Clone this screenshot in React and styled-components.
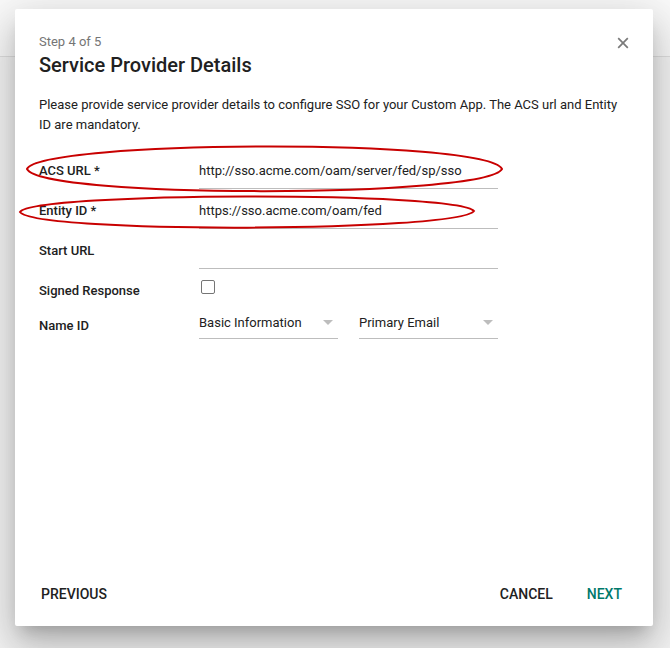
import React, { useState } from 'react';
import styled, { createGlobalStyle } from 'styled-components';

const GlobalStyle = createGlobalStyle`
  html, body {
    margin: 0;
    padding: 0;
    background: #f5f5f5;
    font-family: Roboto, "Liberation Sans", Arial, sans-serif;
    color: #212121;
  }
  * { box-sizing: border-box; }
`;

const Page = styled.div`
  position: relative;
  width: 670px;
  height: 648px;
  overflow: hidden;
  background: #f5f5f5;
`;

const AppBar = styled.div`
  height: 57px;
  background: #fafafa;
  border-bottom: 1px solid #e0e0e0;
`;

const Overlay = styled.div`
  position: absolute;
  inset: 0;
  padding: 9px 17px 22px 15px;
`;

const Dialog = styled.div`
  position: relative;
  width: 638px;
  height: 617px;
  background: #fff;
  border-radius: 2px;
  box-shadow: 0 11px 15px -7px rgba(0, 0, 0, 0.2), 0 24px 38px 3px rgba(0, 0, 0, 0.14),
    0 9px 46px 8px rgba(0, 0, 0, 0.12);
  display: flex;
  flex-direction: column;
`;

const Header = styled.div`
  position: relative;
  padding: 25px 24px 0 24px;
`;

const Step = styled.div`
  font-size: 13px;
  line-height: 16px;
  color: #757575;
`;

const Title = styled.h2`
  margin: 3px 0 0;
  font-size: 20px;
  line-height: 24px;
  font-weight: 500;
  color: #212121;
`;

const CloseButton = styled.button`
  position: absolute;
  top: 22px;
  right: 18px;
  width: 24px;
  height: 24px;
  padding: 0;
  border: none;
  background: transparent;
  display: flex;
  align-items: center;
  justify-content: center;
  cursor: pointer;
  color: #7a7a7a;
`;

const Body = styled.div`
  flex: 1;
  padding: 18px 24px 0 24px;
`;

const Description = styled.p`
  margin: 0 0 15px;
  font-size: 13px;
  line-height: 20px;
  color: #212121;
`;

const Form = styled.div`
  position: relative;
  display: flex;
  flex-direction: column;
`;

const Row = styled.div`
  display: grid;
  grid-template-columns: 160px 299px;
  grid-template-rows: ${p => p.$h || 40}px;
  align-items: center;
`;

const Label = styled.label`
  font-size: 13px;
  font-weight: 500;
  color: #212121;
`;

const TextInput = styled.input`
  width: 100%;
  height: 36px;
  margin-top: 2px;
  padding: 0;
  border: none;
  border-bottom: 1px solid #bdbdbd;
  background: transparent;
  font-family: inherit;
  font-size: 13px;
  color: #212121;
  outline: none;
`;

const CheckBox = styled.span`
  display: block;
  width: 14px;
  height: 14px;
  margin: 0 0 6px 2px;
  border: 1.5px solid #757575;
  border-radius: 2px;
  background: #fff;
`;

const SelectPair = styled.div`
  display: grid;
  grid-template-columns: 139px 139px;
  column-gap: 21px;
  margin-top: -5px;
`;

const Select = styled.div`
  height: 32px;
  display: flex;
  align-items: center;
  justify-content: space-between;
  padding-right: 5px;
  border-bottom: 1px solid #bdbdbd;
  font-size: 13px;
  color: #212121;
`;

const Caret = styled.span`
  width: 0;
  height: 0;
  border-left: 5px solid transparent;
  border-right: 5px solid transparent;
  border-top: 5px solid #bdbdbd;
`;

const Marks = styled.svg`
  position: absolute;
  left: -39px;
  top: 0;
  pointer-events: none;
  overflow: visible;
`;

const Footer = styled.div`
  display: flex;
  align-items: center;
  padding: 0 23px 14px 18px;
`;

const Spacer = styled.div`
  flex: 1;
`;

const FlatButton = styled.button`
  height: 36px;
  padding: 0 8px;
  margin-left: ${p => p.$gap || 0}px;
  border: none;
  background: transparent;
  font-family: inherit;
  font-size: 14px;
  font-weight: 500;
  text-transform: uppercase;
  color: ${p => (p.$primary ? '#00796b' : '#212121')};
  cursor: pointer;
`;

export default function App() {
  const [acs, setAcs] = useState('http://sso.acme.com/oam/server/fed/sp/sso');
  const [entity, setEntity] = useState('https://sso.acme.com/oam/fed');
  const [start, setStart] = useState('');

  return (
    <>
      <GlobalStyle />
      <Page>
        <AppBar />
        <Overlay>
          <Dialog>
            <Header>
              <Step>Step 4 of 5</Step>
              <Title>Service Provider Details</Title>
              <CloseButton aria-label="Close">
                <svg width="12" height="12" viewBox="0 0 12 12">
                  <path d="M1.2 1.2L10.8 10.8M10.8 1.2L1.2 10.8" stroke="currentColor" strokeWidth="1.7" />
                </svg>
              </CloseButton>
            </Header>
            <Body>
              <Description>
                Please provide service provider details to configure SSO for your Custom App. The ACS url and Entity ID are mandatory.
              </Description>
              <Form>
                <Row>
                  <Label>ACS URL *</Label>
                  <TextInput value={acs} onChange={e => setAcs(e.target.value)} />
                </Row>
                <Row>
                  <Label>Entity ID *</Label>
                  <TextInput value={entity} onChange={e => setEntity(e.target.value)} />
                </Row>
                <Row>
                  <Label>Start URL</Label>
                  <TextInput value={start} onChange={e => setStart(e.target.value)} />
                </Row>
                <Row $h={40}>
                  <Label>Signed Response</Label>
                  <CheckBox />
                </Row>
                <Row $h={30}>
                  <Label>Name ID</Label>
                  <SelectPair>
                    <Select>
                      Basic Information
                      <Caret />
                    </Select>
                    <Select>
                      Primary Email
                      <Caret />
                    </Select>
                  </SelectPair>
                </Row>
                {/* hand-drawn annotation rings over the two mandatory fields */}
                <Marks width="520" height="90">
                  <path
                    d="M 27 19 C 40 -10, 485 -12, 502 19 C 486 48, 42 49, 27 19 Z"
                    fill="none"
                    stroke="#c80000"
                    strokeWidth="2"
                  />
                  <path
                    d="M 20 62 C 34 42, 458 41, 474 61 C 458 82, 36 84, 20 62 Z"
                    fill="none"
                    stroke="#c80000"
                    strokeWidth="2"
                  />
                </Marks>
              </Form>
            </Body>
            <Footer>
              <FlatButton>Previous</FlatButton>
              <Spacer />
              <FlatButton>Cancel</FlatButton>
              <FlatButton $primary $gap={18}>Next</FlatButton>
            </Footer>
          </Dialog>
        </Overlay>
      </Page>
    </>
  );
}
